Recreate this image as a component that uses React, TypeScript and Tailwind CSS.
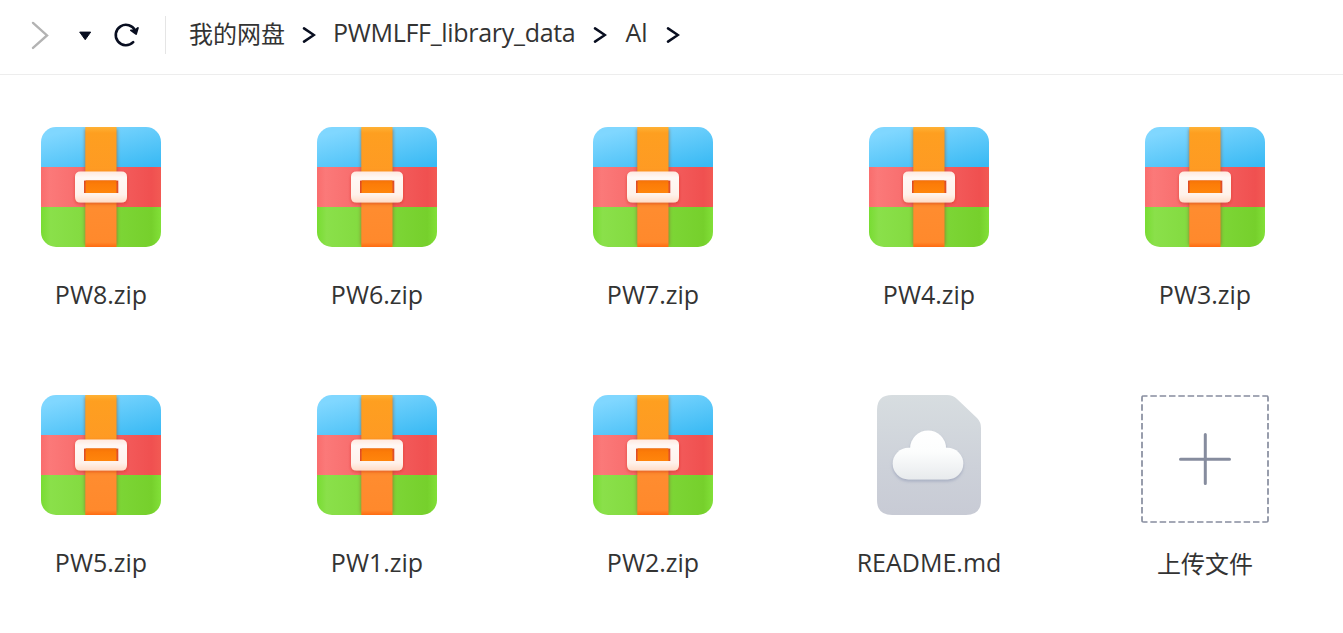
import React from "react";

type FileEntry = { name: string; kind: "zip" | "cloud" };

const files: FileEntry[] = [
  { name: "PW8.zip", kind: "zip" },
  { name: "PW6.zip", kind: "zip" },
  { name: "PW7.zip", kind: "zip" },
  { name: "PW4.zip", kind: "zip" },
  { name: "PW3.zip", kind: "zip" },
  { name: "PW5.zip", kind: "zip" },
  { name: "PW1.zip", kind: "zip" },
  { name: "PW2.zip", kind: "zip" },
  { name: "README.md", kind: "cloud" },
];

function IconDefs() {
  return (
    <svg className="absolute size-0" aria-hidden="true">
      <defs>
        <clipPath id="zipShape"><rect width="120" height="120" rx="15" /></clipPath>
        <clipPath id="uploadShape"><rect width="128" height="128" rx="3" /></clipPath>
        <linearGradient id="zipBlue" gradientUnits="userSpaceOnUse" x1="40" y1="0" x2="54" y2="54">
          <stop offset="0" stopColor="#80d7ff" />
          <stop offset="1" stopColor="#3abaf4" />
        </linearGradient>
        <linearGradient id="zipRed">
          <stop offset="0" stopColor="#f96d6d" />
          <stop offset="0.07" stopColor="#fb7979" />
          <stop offset="0.92" stopColor="#f05050" />
          <stop offset="1" stopColor="#f25a54" />
        </linearGradient>
        <linearGradient id="zipGreen">
          <stop offset="0" stopColor="#78dc32" />
          <stop offset="0.08" stopColor="#8ae04a" />
          <stop offset="0.92" stopColor="#76d02c" />
          <stop offset="1" stopColor="#82e038" />
        </linearGradient>
        <linearGradient id="zipStrap" x2="0" y2="1">
          <stop offset="0" stopColor="#ffb135" />
          <stop offset="0.05" stopColor="#fe9f20" />
          <stop offset="0.45" stopColor="#ff9924" />
          <stop offset="0.6" stopColor="#ff8d30" />
          <stop offset="0.96" stopColor="#ff892c" />
          <stop offset="1" stopColor="#ff6b10" />
        </linearGradient>
        <linearGradient id="zipBuckle" x2="0" y2="1">
          <stop offset="0" stopColor="#ffe9df" />
          <stop offset="0.2" stopColor="#fff8f5" />
          <stop offset="0.75" stopColor="#fff2eb" />
          <stop offset="1" stopColor="#ffdcc8" />
        </linearGradient>
        <linearGradient id="zipSlot" x2="0" y2="1">
          <stop offset="0" stopColor="#f57308" />
          <stop offset="0.3" stopColor="#fc7c08" />
          <stop offset="1" stopColor="#ff850c" />
        </linearGradient>
        <filter id="strapShadow" x="-30%" y="-10%" width="160%" height="120%">
          <feGaussianBlur stdDeviation="1.5" />
        </filter>
        <filter id="buckleShadow" x="-20%" y="-20%" width="140%" height="150%">
          <feDropShadow dx="0" dy="1.5" stdDeviation="1.5" floodColor="#c92c18" floodOpacity="0.5" />
        </filter>
        <linearGradient id="docFill" x2="0" y2="1">
          <stop offset="0" stopColor="#d7dde0" />
          <stop offset="0.6" stopColor="#cdd1d9" />
          <stop offset="1" stopColor="#c8cbd5" />
        </linearGradient>
        <linearGradient id="cloudFill" gradientUnits="userSpaceOnUse" x1="0" y1="35" x2="0" y2="84">
          <stop offset="0" stopColor="#ffffff" />
          <stop offset="0.45" stopColor="#fcfdfd" />
          <stop offset="1" stopColor="#e8ebed" />
        </linearGradient>
        <filter id="cloudShadow" x="-20%" y="-20%" width="140%" height="150%">
          <feDropShadow dx="0" dy="2" stdDeviation="1.5" floodColor="#8f98b3" floodOpacity="0.6" />
        </filter>
      </defs>
    </svg>
  );
}

function ZipIcon() {
  return (
    <svg width="120" height="120" viewBox="0 0 120 120">
      <g clipPath="url(#zipShape)">
        <rect width="120" height="40" fill="url(#zipBlue)" />
        <rect y="40" width="120" height="40" fill="url(#zipRed)" />
        <rect y="80" width="120" height="40" fill="url(#zipGreen)" />
        <rect x="43.5" y="2" width="33" height="116" fill="#8c542e" opacity="0.5" filter="url(#strapShadow)" />
        <rect x="44.3" width="31.2" height="120" fill="url(#zipStrap)" />
        <rect x="43" y="53" width="34" height="14" fill="#e5582c" />
        <g filter="url(#buckleShadow)">
          <path fillRule="evenodd" fill="url(#zipBuckle)" d="M39.5 44.5H80.5Q86 44.5 86 50V70Q86 75.5 80.5 75.5H39.5Q34 75.5 34 70V50Q34 44.5 39.5 44.5ZM43 53.4V66H77.4V53.4Z" />
        </g>
        <rect x="44.6" y="53.4" width="30.8" height="12.6" fill="url(#zipSlot)" />
      </g>
    </svg>
  );
}

function CloudFileIcon() {
  return (
    <svg width="104" height="120" viewBox="0 0 104 120">
      <path fill="url(#docFill)" d="M15 0H70Q76 0 80 4L100 23Q104 27 104 33V105Q104 120 89 120H15Q0 120 0 105V15Q0 0 15 0Z" />
      <g filter="url(#cloudShadow)" fill="url(#cloudFill)">
        <rect x="15.7" y="52.8" width="70.6" height="31.6" rx="15.8" />
        <circle cx="51.1" cy="53.4" r="18" />
      </g>
    </svg>
  );
}

function Crumb({ label, className }: { label: string; className: string }) {
  return (
    <>
      <span className={className}>{label}</span>
      <svg className="shrink-0" width="14" height="18" viewBox="0 0 14 18" fill="none">
        <path d="M2 2.4L11.9 9L2 15.6" stroke="#080e20" strokeWidth="2.5" strokeLinecap="round" />
      </svg>
    </>
  );
}

export default function App() {
  return (
    <div className="h-[633px] w-full overflow-hidden bg-white font-['Open_Sans','Noto_Sans_CJK_SC',sans-serif] text-[25px] text-[#333333]">
      <IconDefs />
      <header className="flex h-[75px] items-center border-b border-[#ededed] pb-1 whitespace-nowrap">
        <svg className="ml-[30px] shrink-0" width="20" height="30" viewBox="0 0 20 30" fill="none">
          <path d="M3 2.9L17 15.4L3 27.9" stroke="#b3b3b3" strokeWidth="2.4" strokeLinecap="round" />
        </svg>
        <svg className="ml-[28px] shrink-0" width="14" height="12" viewBox="0 0 14 12">
          <path d="M1.7 3.1H12.7L7.2 10.7Z" fill="#080e20" stroke="#080e20" strokeLinejoin="round" />
        </svg>
        <svg className="ml-[20px] shrink-0" width="28" height="28" viewBox="0 0 28 28" fill="none">
          <path d="M21.2 21.2A10.2 10.2 0 1 1 23.2 9.8" stroke="#080e20" strokeWidth="2.6" strokeLinecap="round" />
          <path d="M18.9 9.3L22.7 9.4L25.9 6.9L24.1 13Z" fill="#080e20" stroke="#080e20" strokeWidth="1.8" strokeLinejoin="round" />
        </svg>
        <div className="ml-[25px] h-[38px] w-px bg-[#e5e5e5]" />
        <nav className="ml-[23px] flex items-center leading-[36px]">
          <Crumb label="我的网盘" className="mr-[17px] -mt-[2px] text-[24px]" />
          <Crumb label="PWMLFF_library_data" className="mr-[18px] ml-[17px] -mt-[6px] tracking-[-0.3px]" />
          <Crumb label="Al" className="mr-[18px] ml-[18px] -mt-[6px]" />
        </nav>
      </header>
      <main className="grid grid-cols-[repeat(5,128px)] auto-rows-[268px] gap-x-[148px] pt-[52px] pl-[37px]">
        {files.map((file) => (
          <div key={file.name} className="flex flex-col items-center">
            <div className="h-[149px]">{file.kind === "zip" ? <ZipIcon /> : <CloudFileIcon />}</div>
            <span className="leading-[36px] whitespace-nowrap">{file.name}</span>
          </div>
        ))}
        <div className="flex flex-col items-center">
          <div className="h-[150px]">
            <svg width="128" height="128" viewBox="0 0 128 128" fill="none" stroke="#868c9e">
              <g clipPath="url(#uploadShape)" strokeWidth="1.7" strokeDasharray="6.5 2.83">
                <path d="M0 1H128M0 127H128M1 0V128M127 0V128" />
              </g>
              <path d="M39.5 64.3H88.5M64.3 39.5V88.5" strokeWidth="3" strokeLinecap="round" />
            </svg>
          </div>
          <span className="pt-px text-[24px] leading-[36px]">上传文件</span>
        </div>
      </main>
    </div>
  );
}
